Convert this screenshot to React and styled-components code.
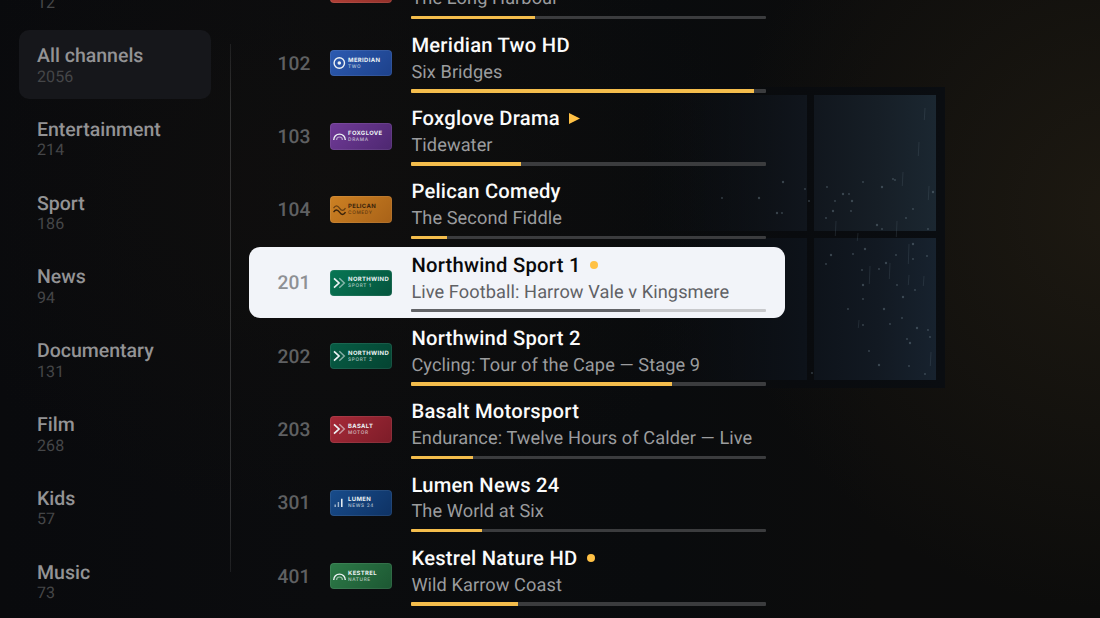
import React from 'react';
import styled, { createGlobalStyle } from 'styled-components';

const GlobalStyle = createGlobalStyle`
  * {
    box-sizing: border-box;
  }

  body {
    margin: 0;
    background: #0b0b0d;
    font-family: Roboto, 'Liberation Sans', sans-serif;
    text-rendering: geometricPrecision;
    overflow: hidden;
  }
`;

const Screen = styled.main`
  position: relative;
  display: flex;
  width: 1100px;
  height: 618px;
  overflow: hidden;
  background:
    radial-gradient(ellipse 400px 400px at 1120px 210px, rgba(50, 41, 25, 0.45), transparent),
    radial-gradient(ellipse 420px 330px at 330px 190px, rgba(20, 17, 14, 0.5), transparent),
    linear-gradient(90deg, #090a0d, #0b0c0e 30%, #090b0d 60%, #0c0c0c 80%, #0c0c0b);
`;

const Backdrop = styled.svg`
  position: absolute;
  inset: 0;
`;

const Sidebar = styled.nav`
  position: relative;
  display: flex;
  flex: none;
  flex-direction: column;
  gap: 4.8px;
  width: 192px;
  margin: -43.8px 0 0 19px;
`;

const Category = styled.div`
  flex: none;
  height: 69px;
  padding: 14px 18px 0;
  border-radius: 10px;
  background: ${props => props.$active ? '#16171b' : 'transparent'};
`;

const CategoryName = styled.div`
  color: #939395;
  font-size: 19.5px;
  font-weight: 500;
  line-height: 24px;
  white-space: nowrap;
`;

const CategoryCount = styled.div`
  margin-top: -0.4px;
  color: #454648;
  font-size: 16px;
  line-height: 18px;
  letter-spacing: 0.1px;
`;

const Divider = styled.div`
  position: relative;
  flex: none;
  width: 1px;
  height: 528px;
  margin: 44px 0 0 18.5px;
  background: linear-gradient(rgba(255, 255, 255, 0.08), rgba(255, 255, 255, 0.15) 12%, rgba(255, 255, 255, 0.15) 88%, rgba(255, 255, 255, 0.08));
`;

const ChannelList = styled.section`
  position: relative;
  display: flex;
  flex: none;
  flex-direction: column;
  gap: 2.3px;
  width: 536px;
  margin: -45.8px 0 0 18.1px;
`;

const ChannelRow = styled.article`
  display: flex;
  flex: none;
  align-items: center;
  height: 71px;
  padding: 0 19px 0 29px;
  border-radius: 11px;
  background: ${props => props.$selected ? '#f2f4f9' : 'transparent'};
`;

const ChannelNumber = styled.div`
  flex: none;
  width: 52px;
  color: ${props => props.$selected ? '#8e9094' : '#5f6062'};
  font-size: 19.2px;
  font-weight: 500;
`;

const Logo = styled.div`
  display: flex;
  flex: none;
  align-items: center;
  gap: 2.5px;
  width: 62px;
  height: 26.5px;
  padding: 1px 0 0 2px;
  border: 1px solid rgba(255, 255, 255, 0.08);
  border-radius: 4px;
  background: ${props => props.$background};
  background-origin: border-box;
  color: ${props => props.$ink};
`;

const LogoMark = styled.svg`
  flex: none;
  width: 13px;
  height: 13px;
  fill: none;
  stroke: currentColor;
`;

const LogoText = styled.div`
  font-family: Inter, sans-serif;
  font-size: 5.9px;
  font-weight: 700;
  line-height: 7px;
  letter-spacing: 0.35px;
  white-space: nowrap;
`;

const LogoSubtext = styled.div`
  font-family: Inter, sans-serif;
  font-size: 4.7px;
  font-weight: 500;
  line-height: 7px;
  letter-spacing: 0.65px;
  opacity: 0.7;
  white-space: nowrap;
`;

const Details = styled.div`
  flex: 1;
  height: 71px;
  margin-left: 19.8px;
  padding-top: 5.4px;
`;

const Title = styled.div`
  display: flex;
  align-items: center;
  gap: 9.5px;
  color: ${props => props.$selected ? '#08090b' : '#fbfbfb'};
  font-size: 20.2px;
  font-weight: 500;
  line-height: 25px;
  letter-spacing: 0.25px;
`;

const Programme = styled.div`
  margin-top: 1.8px;
  color: ${props => props.$selected ? '#606165' : '#9b9c9e'};
  font-size: 18.2px;
  line-height: 25px;
  letter-spacing: 0.08px;
  white-space: nowrap;
`;

const Track = styled.div`
  height: 3.4px;
  margin-top: 4.5px;
  border-radius: 1px;
  overflow: hidden;
  background: ${props => props.$selected ? '#c8c9cc' : '#3b3c3e'};
`;

const Progress = styled.div`
  height: 100%;
  background: ${props => props.$selected ? '#626367' : '#f4bd4c'};
`;

const Dot = styled.span`
  width: 8px;
  height: 8px;
  border-radius: 50%;
  background: #ffc145;
`;

const Arrow = styled.svg`
  width: 11px;
  height: 11px;
  fill: #ffc145;
`;

const categories = [
  { name: 'Favourites', count: 12 },
  { name: 'All channels', count: 2056, active: true },
  { name: 'Entertainment', count: 214 },
  { name: 'Sport', count: 186 },
  { name: 'News', count: 94 },
  { name: 'Documentary', count: 131 },
  { name: 'Film', count: 268 },
  { name: 'Kids', count: 57 },
  { name: 'Music', count: 73 },
];

const channels = [
  { number: 101, name: 'Meridian One HD', programme: 'The Long Harbour', progress: 35, brand: 'MERIDIAN', sub: 'ONE', mark: 'ring', background: 'linear-gradient(135deg, #b9443a, #93302a)' },
  { number: 102, name: 'Meridian Two HD', programme: 'Six Bridges', progress: 96.8, brand: 'MERIDIAN', sub: 'TWO', mark: 'ring', background: 'linear-gradient(135deg, #2c5bb1, #1d418b)' },
  { number: 103, name: 'Foxglove Drama', programme: 'Tidewater', progress: 31, brand: 'FOXGLOVE', sub: 'DRAMA', mark: 'arch', background: 'linear-gradient(135deg, #713b98, #4d2770)', badge: 'play' },
  { number: 104, name: 'Pelican Comedy', programme: 'The Second Fiddle', progress: 10, brand: 'PELICAN', sub: 'COMEDY', mark: 'wave', background: 'linear-gradient(135deg, #cd8123, #a86218)', ink: '#39220b' },
  { number: 201, name: 'Northwind Sport 1', programme: 'Live Football: Harrow Vale v Kingsmere', progress: 64.5, brand: 'NORTHWIND', sub: 'SPORT 1', mark: 'chevrons', background: 'linear-gradient(135deg, #087654, #05553e)', badge: 'dot', selected: true },
  { number: 202, name: 'Northwind Sport 2', programme: 'Cycling: Tour of the Cape — Stage 9', progress: 73.5, brand: 'NORTHWIND', sub: 'SPORT 2', mark: 'chevrons', background: 'linear-gradient(135deg, #075d45, #044331)' },
  { number: 203, name: 'Basalt Motorsport', programme: 'Endurance: Twelve Hours of Calder — Live', progress: 17.5, brand: 'BASALT', sub: 'MOTOR', mark: 'chevrons', background: 'linear-gradient(135deg, #a72a38, #7c1c28)' },
  { number: 301, name: 'Lumen News 24', programme: 'The World at Six', progress: 20, brand: 'LUMEN', sub: 'NEWS 24', mark: 'bars', background: 'linear-gradient(135deg, #184c8b, #0e3264)' },
  { number: 401, name: 'Kestrel Nature HD', programme: 'Wild Karrow Coast', progress: 30, brand: 'KESTREL', sub: 'NATURE', mark: 'arch', background: 'linear-gradient(135deg, #2d7a48, #1c5732)', badge: 'dot' },
];

const marks = {
  ring: <><circle cx="6.3" cy="6" r="5.2" strokeWidth="1.4" /><circle cx="6.3" cy="6" r="1.8" fill="currentColor" stroke="none" /></>,
  arch: <><path d="M.7 9.9a5.8 5.8 0 0 1 11.6 0" strokeWidth="1.4" /><path d="M3.6 9.9a2.9 2.9 0 0 1 5.8 0" strokeWidth="1.2" opacity=".6" /></>,
  wave: <><path d="M.5 4.2c2-3 4-3 6 0s4 3 6 0" strokeWidth="1.2" opacity=".65" /><path d="M.5 8.2c2-3 4-3 6 0s4 3 6 0" strokeWidth="1.4" /></>,
  chevrons: <><path d="m1 1.3 5 4.7-5 4.7" strokeWidth="1.7" /><path d="m6.3 1.3 5 4.7-5 4.7" strokeWidth="1.5" opacity=".55" /></>,
  bars: <><path d="M2.2 10V7.5M5.4 10V5" strokeWidth="1.4" opacity=".65" /><path d="M8.8 10V1.8" strokeWidth="1.5" /></>,
};

const drops = [
  [783, 182], [805, 189], [827, 187], [843, 194], [849, 194], [835, 201], [852, 201], [809, 201],
  [863, 182], [882, 187], [893, 179], [895, 180], [933, 192], [913, 209], [906, 218], [877, 225],
  [882, 229], [928, 229], [833, 211], [826, 218], [851, 211], [865, 249], [853, 254], [896, 255],
  [913, 244], [927, 256], [913, 259], [831, 255], [826, 264], [862, 270], [886, 263], [879, 269],
  [915, 290], [863, 285], [897, 285], [863, 299], [903, 297], [848, 309], [902, 318], [884, 309],
  [890, 324], [863, 325], [917, 328], [928, 330], [907, 339], [910, 343], [930, 337], [869, 351],
  [879, 365], [909, 366], [925, 374], [759, 198], [722, 198], [782, 213], [777, 213], [812, 373],
];

const streaks = [
  [925, 108, 12], [919, 142, 14], [903, 172, 14], [929, 186, 14], [836, 221, 15], [897, 221, 16],
  [909, 244, 20], [870, 266, 18], [890, 263, 16], [909, 275, 10], [924, 276, 10], [931, 352, 14],
  [859, 320, 8], [858, 233, 8],
];

const WindowScene = () => (
  <Backdrop width="1100" height="618" viewBox="0 0 1100 618" aria-hidden="true">
    <defs>
      <linearGradient id="frame" x1="640" x2="945" gradientUnits="userSpaceOnUse">
        <stop stopColor="#090b0e" stopOpacity="0" />
        <stop offset=".5" stopColor="#090b0e" />
        <stop offset="1" stopColor="#0a0d11" />
      </linearGradient>
      <linearGradient id="upper" x1="640" x2="936" gradientUnits="userSpaceOnUse">
        <stop stopColor="#0b0e12" stopOpacity="0" />
        <stop offset=".55" stopColor="#10151c" />
        <stop offset=".8" stopColor="#161e26" />
        <stop offset="1" stopColor="#1b2731" />
      </linearGradient>
      <linearGradient id="lower" x1="640" x2="936" gradientUnits="userSpaceOnUse">
        <stop stopColor="#0b0d11" stopOpacity="0" />
        <stop offset=".55" stopColor="#0d1219" />
        <stop offset=".8" stopColor="#121922" />
        <stop offset="1" stopColor="#17222e" />
      </linearGradient>
    </defs>
    <rect x="640" y="87" width="305" height="301" fill="url(#frame)" />
    <rect x="640" y="95" width="167" height="136" fill="url(#upper)" />
    <rect x="814" y="95" width="122" height="136" fill="url(#upper)" />
    <rect x="640" y="238" width="167" height="142" fill="url(#lower)" />
    <rect x="814" y="238" width="122" height="142" fill="url(#lower)" />
    <g fill="#6c7e8a" opacity=".45">
      {drops.map(([x, y], i) => <circle key={i} cx={x} cy={y} r={i % 3 ? 0.9 : 1.2} />)}
    </g>
    <g stroke="#667885" strokeWidth=".7" opacity=".3">
      {streaks.map(([x, y, length]) => <path key={`${x}-${y}`} d={`M${x} ${y}l-.7 ${length}`} />)}
    </g>
  </Backdrop>
);

const ChannelLogo = ({ brand, sub, mark, background, ink = '#edf3f5' }) => (
  <Logo $background={background} $ink={ink}>
    <LogoMark viewBox="0 0 13 13">{marks[mark]}</LogoMark>
    <div>
      <LogoText>{brand}</LogoText>
      <LogoSubtext>{sub}</LogoSubtext>
    </div>
  </Logo>
);

const Channel = ({ number, name, programme, progress, badge, selected, ...logo }) => (
  <ChannelRow $selected={selected}>
    <ChannelNumber $selected={selected}>{number}</ChannelNumber>
    <ChannelLogo {...logo} />
    <Details>
      <Title $selected={selected}>
        {name}
        {badge === 'dot' && <Dot />}
        {badge === 'play' && <Arrow viewBox="0 0 11 11"><path d="M0 0v11l11-5.5z" /></Arrow>}
      </Title>
      <Programme $selected={selected}>{programme}</Programme>
      <Track $selected={selected}>
        <Progress $selected={selected} style={{ width: `${progress}%` }} />
      </Track>
    </Details>
  </ChannelRow>
);

const App = () => (
  <>
    <GlobalStyle />
    <Screen>
      <WindowScene />
      <Sidebar>
        {categories.map(({ name, count, active }) => (
          <Category key={name} $active={active}>
            <CategoryName>{name}</CategoryName>
            <CategoryCount>{count}</CategoryCount>
          </Category>
        ))}
      </Sidebar>
      <Divider />
      <ChannelList>
        {channels.map(channel => <Channel key={channel.number} {...channel} />)}
      </ChannelList>
    </Screen>
  </>
);

export default App;
